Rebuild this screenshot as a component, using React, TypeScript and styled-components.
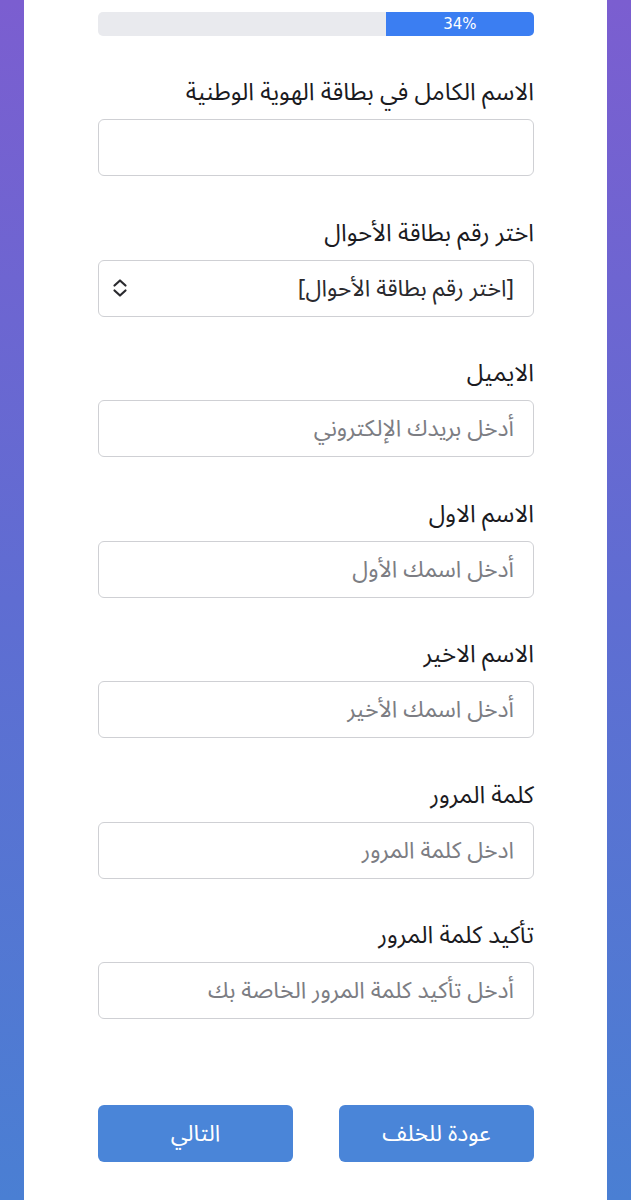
import React from "react";
import styled, { createGlobalStyle } from "styled-components";

const Global = createGlobalStyle`
  html, body { margin: 0; padding: 0; }
  body {
    background: linear-gradient(180deg, #7b5ed0 0%, #5f6dd2 50%, #4a7fd3 100%);
    min-height: 1200px;
    font-family: "Noto Sans Arabic", "DejaVu Sans", "Noto Sans", sans-serif;
  }
`;

const Page = styled.div`
  display: flex;
  padding: 0 24px;
  min-height: 1200px;
`;

const Card = styled.div`
  direction: rtl;
  flex: 1;
  min-width: 0;
  background: #ffffff;
  min-height: 1200px;
  box-sizing: border-box;
  padding: 12px 73px 0 74px;
  display: flex;
  flex-direction: column;
`;

const Track = styled.div`
  height: 24px;
  background: #e9eaee;
  border-radius: 5px;
  overflow: hidden;
  display: flex;
`;

const Fill = styled.div`
  height: 100%;
  background: #3b7ef2;
  color: #fff;
  font-family: "DejaVu Sans", sans-serif;
  font-size: 15px;
  display: flex;
  align-items: center;
  justify-content: center;
  direction: ltr;
`;

const Fields = styled.div`
  display: flex;
  flex-direction: column;
  gap: 43.5px;
  margin-top: 43px;
`;

const Field = styled.div`
  display: flex;
  flex-direction: column;
  gap: 12px;
`;

const Label = styled.label`
  height: 28px;
  line-height: 28px;
  font-size: 24px;
  color: #1b1b1f;
  white-space: nowrap;
`;

const InputBox = styled.div`
  height: 57px;
  box-sizing: border-box;
  border: 1px solid #cfd0d4;
  border-radius: 6px;
  display: flex;
  align-items: center;
  padding: 0 19px 0 12px;
  gap: 8px;
  min-width: 0;
`;

const Input = styled.input`
  flex: 1;
  min-width: 0;
  width: 100%;
  border: none;
  outline: none;
  background: transparent;
  font-family: inherit;
  font-size: 23px;
  color: #1b1b1f;
  direction: rtl;
  padding: 0;
  &::placeholder { color: #7c7d83; }
`;

const SelectText = styled.span`
  flex: 1;
  font-size: 23px;
  color: #2a2a2e;
  white-space: nowrap;
`;

const Buttons = styled.div`
  display: flex;
  justify-content: space-between;
  margin-top: 86px;
`;

const Button = styled.button`
  width: 195px;
  height: 57px;
  border: none;
  border-radius: 6px;
  background: #4a85d8;
  color: #ffffff;
  font-family: inherit;
  font-size: 23px;
  cursor: pointer;
`;

const Chevrons = () => (
  <svg width="18" height="22" viewBox="0 0 18 22" fill="none" stroke="#2a2a2e" strokeWidth="2.2" strokeLinecap="round" strokeLinejoin="round">
    <path d="M3.5 8.5 L9 3.5 L14.5 8.5" />
    <path d="M3.5 13.5 L9 18.5 L14.5 13.5" />
  </svg>
);

const fields = [
  { label: "الاسم الكامل في بطاقة الهوية الوطنية", placeholder: "" },
  { label: "اختر رقم بطاقة الأحوال", select: "[اختر رقم بطاقة الأحوال]" },
  { label: "الايميل", placeholder: "أدخل بريدك الإلكتروني" },
  { label: "الاسم الاول", placeholder: "أدخل اسمك الأول" },
  { label: "الاسم الاخير", placeholder: "أدخل اسمك الأخير" },
  { label: "كلمة المرور", placeholder: "ادخل كلمة المرور" },
  { label: "تأكيد كلمة المرور", placeholder: "أدخل تأكيد كلمة المرور الخاصة بك" },
];

export default function App() {
  const progress = 34;
  return (
    <>
      <Global />
      <Page>
        <Card>
          <Track>
            <Fill style={{ width: `${progress}%` }}>{progress}%</Fill>
          </Track>
          <Fields>
            {fields.map((f) => (
              <Field key={f.label}>
                <Label>{f.label}</Label>
                <InputBox>
                  {f.select ? (
                    <>
                      <SelectText>{f.select}</SelectText>
                      <Chevrons />
                    </>
                  ) : (
                    <Input placeholder={f.placeholder} />
                  )}
                </InputBox>
              </Field>
            ))}
          </Fields>
          <Buttons>
            <Button>عودة للخلف</Button>
            <Button>التالي</Button>
          </Buttons>
        </Card>
      </Page>
    </>
  );
}
